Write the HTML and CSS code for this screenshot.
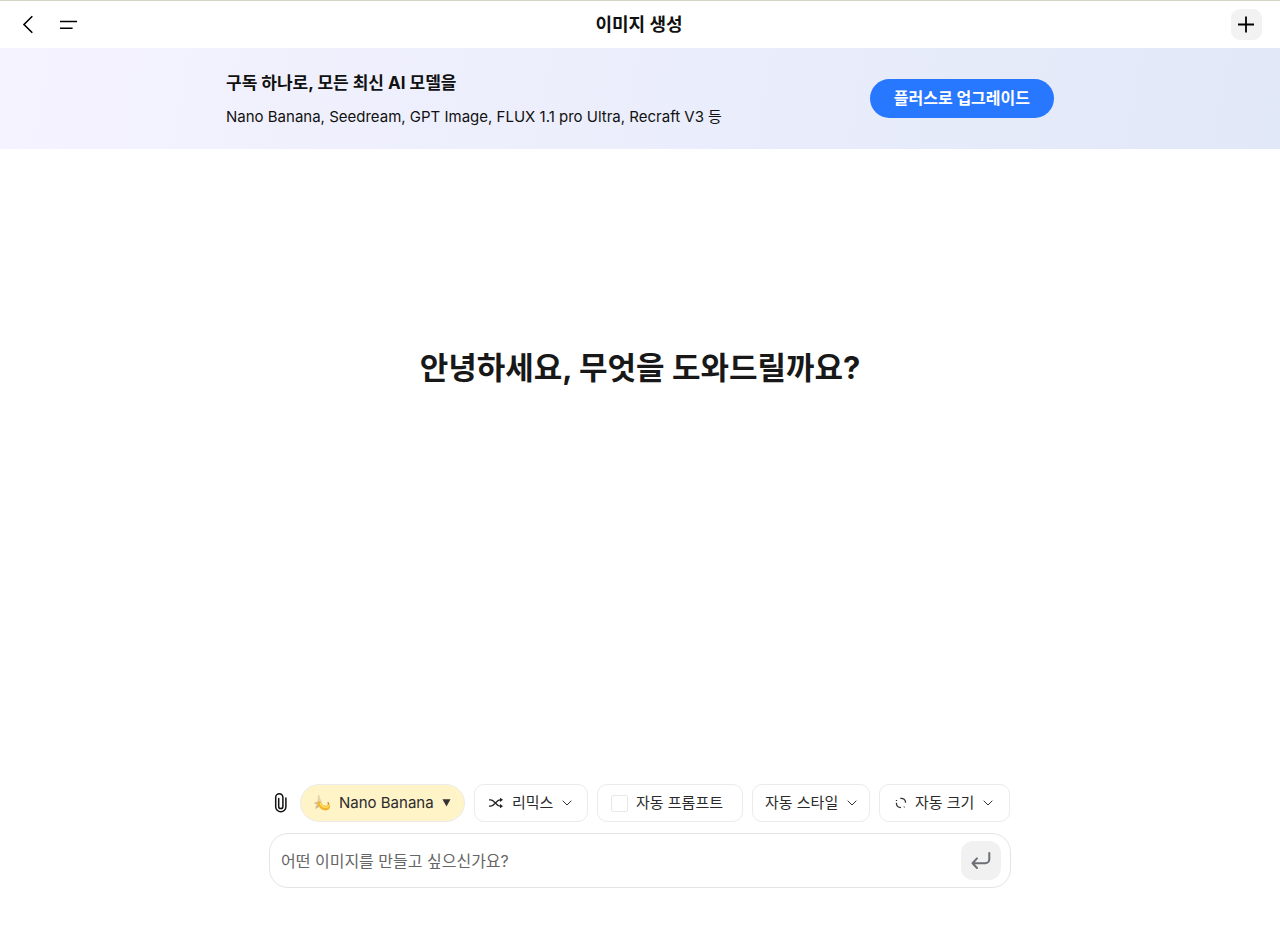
FILE: index.html
```html
<!DOCTYPE html>
<html lang="ko">
<head>
<meta charset="utf-8">
<meta name="viewport" content="width=device-width, initial-scale=1">
<title>이미지 생성</title>
<link rel="stylesheet" href="styles.css">
</head>
<body>
<div class="app">
  <header class="topbar">
    <div class="topbar-side">
      <button class="icon-button" type="button" aria-label="뒤로">
        <svg width="24" height="24" viewBox="0 0 24 24" fill="none" stroke="#000" stroke-width="1.6"><path d="M16.300 3.300 8 11.500l8.300 8.200"/></svg>
      </button>
      <button class="icon-button" type="button" aria-label="메뉴">
        <svg width="24" height="24" viewBox="0 0 24 24" fill="none" stroke="#000" stroke-width="1.6"><path d="M4 8.500h17M4 15.300h12.600"/></svg>
      </button>
    </div>
    <h1 class="topbar-title">이미지 생성</h1>
    <div class="topbar-side topbar-end">
      <button class="add-button" type="button" aria-label="새로 만들기">
        <svg width="31" height="31" viewBox="0 0 31 31" fill="none" stroke="#000" stroke-width="1.8"><path d="M7 15.500h16M15 7.500v16"/></svg>
      </button>
    </div>
  </header>

  <section class="banner">
    <div class="banner-inner">
      <div class="banner-text">
        <h2 class="banner-title">구독 하나로, 모든 최신 AI 모델을</h2>
        <p class="banner-models">Nano Banana, Seedream, GPT Image, FLUX 1.1 pro Ultra, Recraft V3 등</p>
      </div>
      <button class="upgrade" type="button">플러스로 업그레이드</button>
    </div>
  </section>

  <main class="stage">
    <p class="greeting">안녕하세요, 무엇을 도와드릴까요?</p>
  </main>

  <form class="composer">
    <div class="tools">
      <button class="attach" type="button" aria-label="파일 첨부">
        <svg width="14" height="22" viewBox="0 0 14 22" fill="none" stroke="#111" stroke-width="1.5" stroke-linecap="round"><path d="M11.900 6v8.700a5.100 5.100 0 0 1-10.200 0V5.300a3.600 3.600 0 0 1 7.200 0v9.100a2.100 2.100 0 0 1-4.200 0V6.500"/></svg>
      </button>
      <label class="chip chip-model">
        <svg width="18" height="18" viewBox="0 0 18 18"><path d="M5 1.200 6.300.9c.2 2.300 1.100 4.500 2.700 6.600L6.500 12 4.200 8.500C4.700 6 5 3.600 5 1.200z" fill="#e6d3ae"/><path d="M5 7.800C3.300 7.600 1.800 8.300.8 9.800c1.500-.3 2.600 0 3.400 1-1.400.8-2 2.400-1.700 4.500 1-1.200 2.200-1.800 3.800-2z" fill="#d8bc8e"/><path d="M4.800 8.500c.6 3.800 2.700 7.400 7.200 7.900 3.200.3 5.200-1.700 5-4.400-.1-1.100-.7-2-1.500-2.700-.6 1.800-1.800 2.700-3.500 2.500-2.500-.3-3.500-2.600-5.400-4.700z" fill="#f0b52c"/><path d="M7 9.200c1.400 2.600 3.300 4.300 6 4.100 1.300-.1 2.200-.8 2.700-1.900" fill="none" stroke="#ffdc5d" stroke-width="1.600"/><path d="m14.300 8.200 1.300-.1.700 2-1.400.5z" fill="#b58e38"/></svg>
        <select class="chip-select" aria-label="모델"><option>Nano Banana</option></select>
        <svg width="9" height="8" viewBox="0 0 9 8" fill="#333"><path d="M.5.3h8L4.500 7.500z"/></svg>
      </label>
      <label class="chip chip-remix">
        <svg width="16" height="14" viewBox="0 0 16 14" fill="none" stroke="#222" stroke-width="1.300"><path d="M1 3.800h1.600c4 0 5.500 6.400 9.500 6.400h1.100M1 10.200h1.600c4 0 5.500-6.400 9.500-6.400h1.100"/><path d="m12 1.700 3 2.100-3 2.100zM12 8.100l3 2.100-3 2.100z" fill="#222" stroke="none"/></svg>
        <select class="chip-select" aria-label="작업"><option>리믹스</option></select>
        <svg width="10" height="6" viewBox="0 0 10 6" fill="none" stroke="#333"><path d="m.7.7 4.300 4.300L9.300.7"/></svg>
      </label>
      <label class="chip chip-prompt">
        <input class="check" type="checkbox">
        <span>자동 프롬프트</span>
      </label>
      <label class="chip chip-style">
        <select class="chip-select" aria-label="스타일"><option>자동 스타일</option></select>
        <svg width="10" height="6" viewBox="0 0 10 6" fill="none" stroke="#333"><path d="m.7.7 4.300 4.300L9.300.7"/></svg>
      </label>
      <label class="chip chip-size">
        <svg width="12" height="12" viewBox="0 0 12 12" fill="none" stroke="#333" stroke-width="1.300"><path d="M5.300 1.400c3.200-.3 5.300 1.300 5.300 4.400M1.400 5.800c-.1 3.100 1.500 4.900 4.600 4.900M1.500 4V3M8.800 10.200l.7-.5"/></svg>
        <select class="chip-select" aria-label="크기"><option>자동 크기</option></select>
        <svg width="10" height="6" viewBox="0 0 10 6" fill="none" stroke="#333"><path d="m.7.7 4.300 4.300L9.300.7"/></svg>
      </label>
    </div>
    <div class="prompt-box">
      <input class="prompt" type="text" aria-label="이미지 설명" placeholder="어떤 이미지를 만들고 싶으신가요?">
      <button class="send" type="submit" aria-label="보내기">
        <svg width="22" height="20" viewBox="0 0 22 20" fill="none" stroke="#6b6f76" stroke-width="2" stroke-linecap="round" stroke-linejoin="round"><path d="M19.300 2v6.200a4 4 0 0 1-4 4H2.500M7 7.400l-4.500 4.800L7 17"/></svg>
      </button>
    </div>
  </form>
</div>
</body>
</html>
```
FILE: styles.css
```css
* {
  box-sizing: border-box;
}

body {
  margin: 0;
  background: #fff;
  color: #111;
  font-family: Inter, "Noto Sans CJK KR", sans-serif;
}

button,
input,
select {
  margin: 0;
  padding: 0;
  border: 0;
  background: none;
  color: inherit;
  font: inherit;
}

svg {
  display: block;
  flex: none;
}

.app {
  display: flex;
  flex-direction: column;
  min-height: 100vh;
}

.topbar {
  display: flex;
  align-items: center;
  height: 48px;
  padding: 0 18px 0 16px;
  border-top: 1px solid #d2d5c4;
}

.topbar-side {
  display: flex;
  flex: 1;
  gap: 16px;
}

.topbar-end {
  justify-content: flex-end;
}

.topbar-title {
  margin: 0;
  font-size: 18px;
  font-weight: 700;
  line-height: 24px;
}

.add-button {
  border-radius: 9px;
  background: #f2f2f2;
}

.banner {
  padding: 20px 24px;
  background: linear-gradient(100deg, #f5f3ff, #e1e8f8);
}

.banner-inner {
  display: flex;
  align-items: center;
  justify-content: space-between;
  gap: 24px;
  max-width: 828px;
  margin: 0 auto;
}

.banner-title {
  margin: 0 0 6px;
  font-size: 17px;
  font-weight: 700;
  line-height: 30px;
}

.banner-models {
  margin: 0;
  font-size: 15px;
  line-height: 25px;
}

.upgrade {
  flex: none;
  padding: 0 24px;
  border-radius: 20px;
  background: #2878ff;
  color: #fff;
  font-size: 16px;
  font-weight: 700;
  line-height: 39px;
}

.stage {
  display: flex;
  flex: 1;
  align-items: center;
  justify-content: center;
  padding: 0 24px 198px;
}

.greeting {
  margin: 0;
  color: #181818;
  font-size: 31px;
  font-weight: 700;
  line-height: 48px;
}

.composer {
  width: 100%;
  max-width: 742px;
  margin: 0 auto;
  padding: 0 0 40px;
}

.tools {
  display: flex;
  align-items: center;
  gap: 9px;
  margin-bottom: 11px;
  padding: 0 2px 0 5px;
}

.attach {
  margin-right: 3px;
}

.chip {
  display: flex;
  align-items: center;
  gap: 8px;
  height: 38px;
  padding: 0 13px;
  border: 1px solid #ebebeb;
  border-radius: 10px;
  color: #2b2b2b;
  font-size: 15px;
  line-height: 22px;
  white-space: nowrap;
}

.chip-select {
  appearance: none;
  outline: none;
}

.chip-model {
  flex: 0 0 165px;
  padding: 0 12px;
  border-radius: 19px;
  background: #fff3c8;
}

.chip-remix {
  flex: 0 0 114px;
}

.chip-prompt {
  flex: 0 0 146px;
}

.chip-style {
  flex: 0 0 117px;
  padding: 0 12px;
}

.chip-size {
  flex: 0 0 131px;
  padding: 0 15px;
}

.check {
  appearance: none;
  width: 17px;
  height: 17px;
  border: 1px solid #e8e8e8;
  border-radius: 2px;
}

.check:checked {
  background: #2878ff;
}

.prompt-box {
  display: flex;
  align-items: center;
  height: 55px;
  padding: 0 9px 0 11px;
  border: 1px solid #e4e4e4;
  border-radius: 19px;
}

.prompt {
  flex: 1;
  min-width: 0;
  outline: none;
  font-size: 16px;
  line-height: 26px;
}

.prompt::placeholder {
  color: #666;
  opacity: 1;
}

.send {
  display: flex;
  align-items: center;
  justify-content: center;
  width: 40px;
  height: 39px;
  border-radius: 12px;
  background: #f1f1f1;
}
```
